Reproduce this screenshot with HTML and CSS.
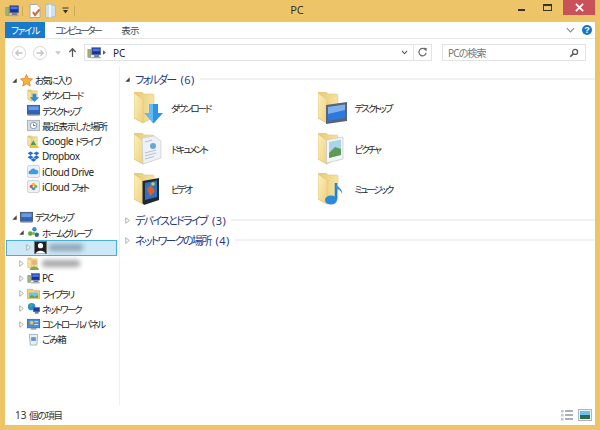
FILE: index.html
```html
<!DOCTYPE html>
<html lang="ja">
<head>
<meta charset="utf-8">
<title>PC</title>
<link rel="stylesheet" href="styles.css">
</head>
<body>
<svg class="defs" width="0" height="0" aria-hidden="true">
  <defs>
    <linearGradient id="fb" x1="0" y1="0" x2="1" y2="0"><stop offset="0" stop-color="#e7c873"/><stop offset="1" stop-color="#f6e4a4"/></linearGradient>
    <linearGradient id="ff" x1="0" y1="0" x2="1" y2="1"><stop offset="0" stop-color="#fcf0bc"/><stop offset="1" stop-color="#efd07e"/></linearGradient>
    <symbol id="folder" viewBox="0 0 30 32">
      <path d="M0 1L1 0H8L10 2H19L20 3V25L9 31L0 26Z" fill="url(#fb)" stroke="#dcbc6c" stroke-width=".5"/>
      <path d="M0 1L9 7.500V31L0 26Z" fill="url(#ff)" stroke="#dfc074" stroke-width=".5"/>
    </symbol>
    <symbol id="minifolder" viewBox="0 0 14 14">
      <path d="M1 1H5L6 2H11V11L5 13L1 11Z" fill="url(#fb)" stroke="#d3b25f" stroke-width=".5"/>
      <path d="M1 2L5 4V13L1 11Z" fill="url(#ff)" stroke="#d3b25f" stroke-width=".4"/>
    </symbol>
    <symbol id="pc" viewBox="0 0 16 16">
      <rect x="5.500" y="2" width="10" height="8" fill="#1c2f9e" stroke="#5a6a8a" stroke-width=".8"/>
      <rect x="6.500" y="3" width="8" height="3" fill="#4b75e0"/>
      <rect x="8" y="10.500" width="6" height="2" fill="#6b7890"/>
      <rect x="1" y="4" width="3.500" height="9" fill="#9fb27a" stroke="#6d7d62" stroke-width=".5"/>
      <rect x="5" y="12.500" width="10.500" height="1.500" fill="#9aa5b5"/>
    </symbol>
    <symbol id="chev-open" viewBox="0 0 8 8"><path d="M6.500 1.500V6.500H1.500Z" fill="#404040"/></symbol>
    <symbol id="chev" viewBox="0 0 8 8"><path d="M2 .8L6 4L2 7.200Z" fill="#fff" stroke="#a6a6a6"/></symbol>
    <symbol id="screen" viewBox="0 0 14 14">
      <rect x=".5" y="1.500" width="13" height="9.500" fill="#2f63bd" stroke="#4b5a72"/>
      <rect x="1.500" y="2.500" width="11" height="4" fill="#6a9ae4"/>
      <rect x=".5" y="11" width="13" height="1.500" fill="#7a8698"/>
    </symbol>
  </defs>
</svg>

<div class="window">
  <header class="titlebar">
    <div class="qat">
      <svg class="qat-pc"><use href="#pc"/></svg>
      <span class="qat-sep"></span>
      <svg class="qat-doc" viewBox="0 0 12 14"><path d="M1 .5H8L11 3.500V13.500H1Z" fill="#fff" stroke="#a9a9a9"/><path d="M4 8L6 11L10.500 5.500" fill="none" stroke="#d8663a" stroke-width="2"/></svg>
      <svg class="qat-fold" viewBox="0 0 11 14"><path d="M.5 .5H5L10.500 1.500V12.500L5 13.500H.5Z" fill="#cfe0f3" stroke="#a9bcd0"/><path d="M5 .5V13.500" stroke="#fff" stroke-width="1.500"/></svg>
      <svg class="qat-drop" viewBox="0 0 7 7"><path d="M.5 .5H6.500V1.500H.5ZM1 3H6L3.500 6.500Z" fill="#333"/></svg>
      <span class="qat-sep"></span>
    </div>
    <div class="title">PC</div>
    <div class="winbtns">
      <span class="wb"><span class="wb-min"></span></span>
      <span class="wb"><span class="wb-max"></span></span>
      <span class="wb-close"><svg viewBox="0 0 10 10" width="9" height="9"><path d="M1 1L9 9M9 1L1 9" stroke="#fff" stroke-width="2"/></svg></span>
    </div>
  </header>

  <div class="client">
    <nav class="ribbon">
      <span class="tab-file">ファイル</span>
      <span class="tab">コンピューター</span>
      <span class="tab tab-view">表示</span>
      <span class="ribbon-right">
        <svg class="rib-chev" viewBox="0 0 10 6"><path d="M1 1L5 5L9 1" fill="none" stroke="#8a8a8a" stroke-width="1.300"/></svg>
        <span class="help">?</span>
      </span>
    </nav>

    <div class="addr-row">
      <span class="nav-btn"><svg viewBox="0 0 10 10"><path d="M8.500 5H2M4.500 2.300L1.800 5L4.500 7.700" fill="none" stroke="#c4c4c4" stroke-width="1.300"/></svg></span>
      <span class="nav-btn"><svg viewBox="0 0 10 10"><path d="M1.500 5H8M5.500 2.300L8.200 5L5.500 7.700" fill="none" stroke="#c4c4c4" stroke-width="1.300"/></svg></span>
      <svg class="nav-drop" viewBox="0 0 7 4"><path d="M0 0H7L3.500 4Z" fill="#c8c8c8"/></svg>
      <svg class="nav-up" viewBox="0 0 10 12"><path d="M5 11V2M1.500 5.500L5 1.800L8.500 5.500" fill="none" stroke="#555" stroke-width="1.400"/></svg>
      <div class="addr">
        <svg class="addr-pc"><use href="#pc"/></svg>
        <svg class="crumb" viewBox="0 0 4 6"><path d="M0 0L4 3L0 6Z" fill="#606060"/></svg>
        <span class="addr-text">PC</span>
        <span class="addr-end">
          <svg class="addr-drop" viewBox="0 0 8 6"><path d="M1 1L4 4.500L7 1" fill="none" stroke="#555" stroke-width="1.300"/></svg>
        </span>
        <span class="addr-refresh"><svg viewBox="0 0 12 12" width="11" height="11"><path d="M9.500 3.500A4 4 0 1 0 10 6.500" fill="none" stroke="#666" stroke-width="1.300"/><path d="M7 .8L10.500 1V4.500Z" fill="#666"/></svg></span>
      </div>
      <div class="search">
        <span class="search-text">PCの検索</span>
        <svg class="search-ico" viewBox="0 0 12 12"><circle cx="7.300" cy="4.700" r="3" fill="none" stroke="#555" stroke-width="1.500"/><path d="M5 7L1.500 10.500" stroke="#555" stroke-width="2"/></svg>
      </div>
    </div>

    <div class="body">
      <aside class="tree">
        <div class="row d0"><svg class="chv"><use href="#chev-open"/></svg><svg class="ico" viewBox="0 0 14 14"><path d="M7 .5L8.900 4.800L13.500 5.300L10 8.400L11 13L7 10.600L3 13L4 8.400L.5 5.300L5.100 4.800Z" fill="#f9b233" stroke="#d9782a" stroke-width=".8"/></svg><span class="k">お気に入り</span></div>
        <div class="row d1"><svg class="ico"><use href="#minifolder"/></svg><svg class="ico over" viewBox="0 0 14 14"><path d="M6 5H10V9H13L8 14L3 9H6Z" fill="#2a8fe0"/></svg><span class="k">ダウンロード</span></div>
        <div class="row d1"><svg class="ico"><use href="#screen"/></svg><span class="k">デスクトップ</span></div>
        <div class="row d1"><svg class="ico" viewBox="0 0 14 14"><rect x=".5" y="1.500" width="13" height="11" fill="#d5dbe0" stroke="#a8b0b8"/><circle cx="7" cy="7" r="3.500" fill="#fff" stroke="#7b93a8"/><path d="M7 5V7H9" stroke="#51697f" fill="none"/></svg><span class="kj">最近表示した場所</span></div>
        <div class="row d1"><svg class="ico"><use href="#minifolder"/></svg><svg class="ico over" viewBox="0 0 14 14"><path d="M7 6L10 11H4Z" fill="#3aa757"/><path d="M7 6L4 11L2.500 14L6 9Z" fill="#2a6fd8"/><path d="M4 11H11L13 14H2.500Z" fill="#f6c026"/></svg><span>Google <span class="k">ドライブ</span></span></div>
        <div class="row d1"><svg class="ico" viewBox="0 0 14 14"><path d="M3.800 1.500L7 3.600L3.800 5.700L.6 3.600ZM10.200 1.500L13.400 3.600L10.200 5.700L7 3.600ZM3.800 5.700L7 7.800L3.800 9.900L.6 7.800ZM10.200 5.700L13.400 7.800L10.200 9.900L7 7.800ZM3.800 10.600L7 8.600L10.200 10.600L7 12.700Z" fill="#1f6fd6"/></svg><span>Dropbox</span></div>
        <div class="row d1"><svg class="ico" viewBox="0 0 14 14"><rect x=".5" y=".5" width="13" height="13" rx="2" fill="#eef1f4" stroke="#c8ced4"/><path d="M3.500 10A2 2 0 0 1 3.800 6A2.900 2.900 0 0 1 9.200 5.300A2.400 2.400 0 0 1 10.500 10Z" fill="#3d9be9"/></svg><span>iCloud Drive</span></div>
        <div class="row d1"><svg class="ico" viewBox="0 0 14 14"><rect x=".5" y=".5" width="13" height="13" rx="2" fill="#eef1f4" stroke="#c8ced4"/><circle cx="7" cy="4.800" r="1.900" fill="#f6c026"/><circle cx="9.200" cy="7" r="1.900" fill="#6dbb45"/><circle cx="7" cy="9.200" r="1.900" fill="#4a90d9"/><circle cx="4.800" cy="7" r="1.900" fill="#e5483f"/><circle cx="7" cy="7" r="1" fill="#fff"/></svg><span>iCloud <span class="k">フォト</span></span></div>

        <div class="tree-gap"></div>

        <div class="row d0"><svg class="chv"><use href="#chev-open"/></svg><svg class="ico"><use href="#screen"/></svg><span class="k">デスクトップ</span></div>
        <div class="row d2"><svg class="chv"><use href="#chev-open"/></svg><svg class="ico" viewBox="0 0 14 14"><circle cx="8" cy="3.500" r="2.400" fill="#3d86c9"/><circle cx="3.500" cy="8" r="2.400" fill="#5aa83f"/><circle cx="10.500" cy="9.500" r="2.400" fill="#2f65ad"/><circle cx="7" cy="8" r="1.800" fill="#7dbb58"/></svg><span class="k">ホームグループ</span></div>
        <div class="row sel"><svg class="chv"><use href="#chev"/></svg><svg class="ico" viewBox="0 0 14 14"><rect x=".5" y=".5" width="13" height="13" fill="#1e1e1e" stroke="#777"/><circle cx="7" cy="5" r="2.800" fill="#fff"/><path d="M2 13.500C2.500 9.500 11.500 9.500 12 13.500Z" fill="#fff"/></svg><span class="blur blur-a"></span></div>
        <div class="row d2"><svg class="chv"><use href="#chev"/></svg><svg class="ico"><use href="#minifolder"/></svg><svg class="ico over" viewBox="0 0 14 14"><circle cx="8" cy="6" r="2.800" fill="#e8b27a"/><path d="M3 14C4 9 12 9 13 14Z" fill="#7fa85a"/></svg><span class="blur blur-b"></span></div>
        <div class="row d2"><svg class="chv"><use href="#chev"/></svg><svg class="ico"><use href="#pc"/></svg><span>PC</span></div>
        <div class="row d2"><svg class="chv"><use href="#chev"/></svg><svg class="ico" viewBox="0 0 14 14"><path d="M.5 2.500H6L7 4H13.500V12.500H.5Z" fill="#f3d377" stroke="#c9a14f" stroke-width=".7"/><rect x="2" y="6" width="10" height="5.500" fill="#6cc4e8"/><path d="M2 11.500L5 8.500L8 10.500L12 9V11.500Z" fill="#5aa34e"/></svg><span class="k">ライブラリ</span></div>
        <div class="row d2"><svg class="chv"><use href="#chev"/></svg><svg class="ico" viewBox="0 0 14 14"><circle cx="5" cy="5" r="4" fill="#2f8cd8"/><path d="M3 3C4.500 2 6.500 2.500 5.500 4.500C4.500 6 3 5.500 3 3Z" fill="#5bb03f"/><rect x="7" y="6" width="6.500" height="4.500" fill="#1d3f9a" stroke="#55657c" stroke-width=".7"/><rect x="8.500" y="11" width="4" height="1.500" fill="#55657c"/></svg><span class="k">ネットワーク</span></div>
        <div class="row d2"><svg class="chv"><use href="#chev"/></svg><svg class="ico" viewBox="0 0 14 14"><rect x=".5" y="1.500" width="13" height="9" fill="#4a8fd0" stroke="#4c6f92"/><circle cx="5" cy="5" r="2" fill="#f3c24a"/><path d="M8 4H12M8 7H12" stroke="#d8ecfa"/><rect x="4" y="11" width="6" height="1.500" fill="#85919e"/></svg><span class="k">コントロール パネル</span></div>
        <div class="row d1"><svg class="ico" viewBox="0 0 14 14"><path d="M2.500 1.500H11.500L10.500 13H3.500Z" fill="#e8eef4" stroke="#9fb0bf"/><rect x="4.500" y="4.500" width="5" height="4" fill="#5c97cf"/></svg><span class="kj">ごみ箱</span></div>
      </aside>

      <main class="content">
        <section>
          <h2 class="group"><svg class="chv"><use href="#chev-open"/></svg><span class="gk">フォルダー</span><span class="gn">(6)</span><i></i></h2>
          <div class="grid">
            <div class="item">
              <svg class="big" viewBox="0 0 30 32"><use href="#folder" width="30" height="32"/>
                <path d="M15 12H24V21H29L19.500 31.500L10.500 21H15Z" fill="#2b94e6"/><path d="M15 12H19V31L10.500 21H15Z" fill="#63baf4"/></svg>
              <span class="label">ダウンロード</span>
            </div>
            <div class="item">
              <svg class="big" viewBox="0 0 30 32"><use href="#folder" width="30" height="32"/>
                <path d="M8 13L29 10V29L8 32Z" fill="#5b6472"/><path d="M10 15L27 12.500V26L10 29Z" fill="#2f78de"/><path d="M10 15L27 12.500V18L10 22Z" fill="#7fb0ee"/></svg>
              <span class="label">デスクトップ</span>
            </div>
            <div class="item">
              <svg class="big" viewBox="0 0 30 32"><use href="#folder" width="30" height="32"/>
                <path d="M8 5L20 3L27 8V25L9 31Z" fill="#eef1f5" stroke="#c6ccd3" stroke-width=".7"/><path d="M11 9L18 7M11 20L22 17M11 23L22 20M11 26L20 23.500" stroke="#b5c2d0"/><circle cx="19" cy="13" r="3" fill="#6aa7cd"/></svg>
              <span class="label">ドキュメント</span>
            </div>
            <div class="item">
              <svg class="big" viewBox="0 0 30 32"><use href="#folder" width="30" height="32"/>
                <path d="M8.500 7L25 4V26L8.500 30Z" fill="#f3f5f7" stroke="#c4c8cc" stroke-width=".7"/><path d="M11 9L23 6.500V22L11 25Z" fill="#a8d5ea"/><path d="M11 20L17 14L23 16V22L11 25Z" fill="#5e9b5b"/></svg>
              <span class="label">ピクチャ</span>
            </div>
            <div class="item">
              <svg class="big" viewBox="0 0 30 32"><use href="#folder" width="30" height="32"/>
                <path d="M8.500 8L25 5V27L10 32L8.500 30Z" fill="#232830"/><path d="M11 10L23 7.500V24L11 27Z" fill="#2774c8"/><path d="M13 16L17 12L21 18L16 24Z" fill="#e05c2c"/><circle cx="19" cy="11" r="1.800" fill="#f0c43a"/></svg>
              <span class="label">ビデオ</span>
            </div>
            <div class="item">
              <svg class="big" viewBox="0 0 30 32"><use href="#folder" width="30" height="32"/>
                <path d="M18 10V27" stroke="#1f82d2" stroke-width="2.500"/><path d="M18 10C19 15 25 15 24 21C23 17 20 16 18 16Z" fill="#2e93e0"/><ellipse cx="13" cy="27" rx="6" ry="4.500" fill="#2b8ade"/></svg>
              <span class="label">ミュージック</span>
            </div>
          </div>
        </section>
        <h2 class="group g-second"><svg class="chv"><use href="#chev"/></svg><span class="gk">デバイスとドライブ</span><span class="gn">(3)</span><i></i></h2>
        <h2 class="group g-third"><svg class="chv"><use href="#chev"/></svg><span class="gk">ネットワークの場所</span><span class="gn">(4)</span><i></i></h2>
      </main>
    </div>

    <footer class="status">
      <span>13 <span class="kj">個の項目</span></span>
      <span class="views">
        <svg viewBox="0 0 13 12" width="13" height="12"><path d="M4 2H12M4 6H12M4 10H12" stroke="#8d97a3" stroke-width="1.500"/><path d="M0 1H2.500V3.500H0ZM0 5H2.500V7.500H0ZM0 9H2.500V11.500H0Z" fill="#bcc6d2"/></svg>
        <svg viewBox="0 0 14 12" width="14" height="12"><rect x=".5" y=".5" width="13" height="11" fill="#eef3f8" stroke="#a9b5c2"/><rect x="2" y="2" width="10" height="4" fill="#6fc0ea"/><rect x="2" y="6" width="10" height="4" fill="#2c6a4e"/></svg>
      </span>
    </footer>
  </div>
</div>
</body>
</html>
```

FILE: styles.css
```css
* { box-sizing: border-box; }
html, body { margin: 0; padding: 0; }
body {
  width: 600px;
  height: 430px;
  overflow: hidden;
  background: #edc468;
  font-family: "Noto Sans", "Noto Sans CJK JP", sans-serif;
  font-size: 10px;
  color: #1e1e1e;
  font-feature-settings: "palt";
}
.defs { position: absolute; }
.window { display: flex; flex-direction: column; height: 430px; padding: 0 5px 5px; }

.titlebar { height: 22px; display: grid; grid-template-columns: 1fr auto 1fr; align-items: start; }
.qat { display: flex; align-items: center; height: 21px; }
.qat-pc { width: 14px; height: 14px; flex: none; margin-right: 3px; }
.qat-doc { width: 12px; height: 14px; flex: none; margin: 0 4px 0 6px; }
.qat-fold { width: 11px; height: 14px; flex: none; margin-right: 6px; }
.qat-sep { width: 1px; height: 10px; background: #c9aa5c; }
.qat-drop { width: 7px; height: 7px; margin-right: 5px; }
.title { font-size: 11px; color: #333; line-height: 20px; padding-right: 6px; }
.winbtns { display: flex; justify-content: flex-end; }
.wb { width: 26px; height: 15px; display: flex; align-items: center; justify-content: center; }
.wb-min { width: 7px; height: 2px; margin-top: 4px; background: #333; }
.wb-max { width: 9px; height: 7px; border: 1px solid #333; border-top-width: 2px; }
.wb-close { width: 32px; height: 15px; margin-left: 3px; background: #c9515a; display: flex; align-items: center; justify-content: center; }

.client { flex: 1; min-height: 0; background: #fff; display: flex; flex-direction: column; }

.ribbon { height: 17px; display: flex; align-items: stretch; border-bottom: 1px solid #e6e6e6; font-size: 9.500px; flex: none; }
.tab-file { width: 40px; background: #1979ca; color: #fff; display: flex; align-items: center; justify-content: center; letter-spacing: -1.200px; }
.tab { display: flex; align-items: center; padding: 0 0 0 10px; color: #444; letter-spacing: -2.300px; }
.tab-view { padding-left: 21px; letter-spacing: -.8px; }
.ribbon-right { margin-left: auto; display: flex; align-items: center; gap: 7px; padding-right: 3px; }
.rib-chev { width: 9px; height: 6px; }
.help { width: 10px; height: 10px; border-radius: 50%; background: #1b72c4; color: #fff; font: bold 9px/10px "Liberation Sans", sans-serif; text-align: center; }

.addr-row { height: 27px; flex: none; display: flex; align-items: center; padding: 0 0 0 7px; }
.nav-btn { width: 14px; height: 14px; border: 1px solid #d8d8d8; border-radius: 50%; display: flex; align-items: center; justify-content: center; margin-right: 7px; }
.nav-btn svg { width: 10px; height: 10px; }
.nav-drop { width: 6px; height: 4px; margin: 0 7px 0 1px; }
.nav-up { width: 9px; height: 11px; margin-right: 7px; }
.addr { width: 348px; height: 17px; border: 1px solid #e3e3e3; display: flex; align-items: center; padding-left: 2px; font-size: 10px; }
.addr-pc { width: 14px; height: 14px; flex: none; }
.crumb { width: 3px; height: 5px; margin: 0 7px 0 2px; }
.addr-end { margin-left: auto; width: 11px; display: flex; justify-content: center; }
.addr-drop { width: 7px; height: 5px; }
.addr-refresh { width: 18px; height: 15px; border-left: 1px solid #e3e3e3; display: flex; align-items: center; justify-content: center; margin-left: 3px; }
.search { width: 144px; height: 17px; margin-left: 10px; border: 1px solid #e3e3e3; display: flex; align-items: center; justify-content: space-between; padding: 0 6px 0 5px; }
.search-text { color: #777; font-size: 10px; letter-spacing: -.9px; }
.search-ico { width: 10px; height: 10px; }

.body { flex: 1; min-height: 0; display: flex; }
.tree { width: 115px; flex: none; border-right: 1px solid #f0f0f0; padding: 6.500px 0 0; letter-spacing: -.45px; }
.row { height: 15.250px; display: flex; align-items: center; gap: 2px; position: relative; white-space: nowrap; }
.chv { width: 7px; height: 7px; flex: none; }
.ico { width: 13px; height: 13px; flex: none; }
.ico.over { position: absolute; left: 22px; top: 1px; }
.k { font-size: 9.500px; letter-spacing: -1.950px; }
.kj { font-size: 9.500px; letter-spacing: -1.200px; }
.d0 { padding-left: 6px; }
.d1 { padding-left: 22px; }
.d2 { padding-left: 13px; }
.sel { margin-left: 1px; padding-left: 19px; background: #cde8f7; outline: 1px solid #45b0e0; outline-offset: -1px; width: 111px; }
.tree-gap { height: 15.250px; }
.blur { display: block; height: 7px; border-radius: 3px; filter: blur(2.500px); }
.blur-a { width: 34px; background: #8ca3b4; }
.blur-b { width: 38px; background: #a5a5a5; }

.content { flex: 1; min-width: 0; padding: 5px 0 0 4px; }
.group { margin: 0; height: 16px; display: flex; align-items: center; gap: 4px; font-size: 11px; font-weight: 400; color: #1f3a8a; white-space: nowrap; }
.gk { letter-spacing: -1.700px; }
.gn { margin-left: 1px; letter-spacing: .5px; }
.group i { flex: 1; height: 2px; background: #f1f1f1; margin-left: 1px; }
.g-second { margin-top: 2.500px; }
.g-third { margin-top: 4px; }
.grid { display: grid; grid-template-columns: 183.500px 1fr; grid-auto-rows: 40.500px; padding: 1px 0 0 10px; }
.item { display: flex; align-items: center; gap: 7px; }
.big { width: 30px; height: 32px; flex: none; display: block; }
.label { font-size: 9.500px; letter-spacing: -2.100px; }

.status { height: 20px; flex: none; display: flex; align-items: center; justify-content: space-between; padding: 0 3px 0 10px; font-size: 10px; color: #333; }
.views { display: flex; gap: 4px; align-items: center; }
```
